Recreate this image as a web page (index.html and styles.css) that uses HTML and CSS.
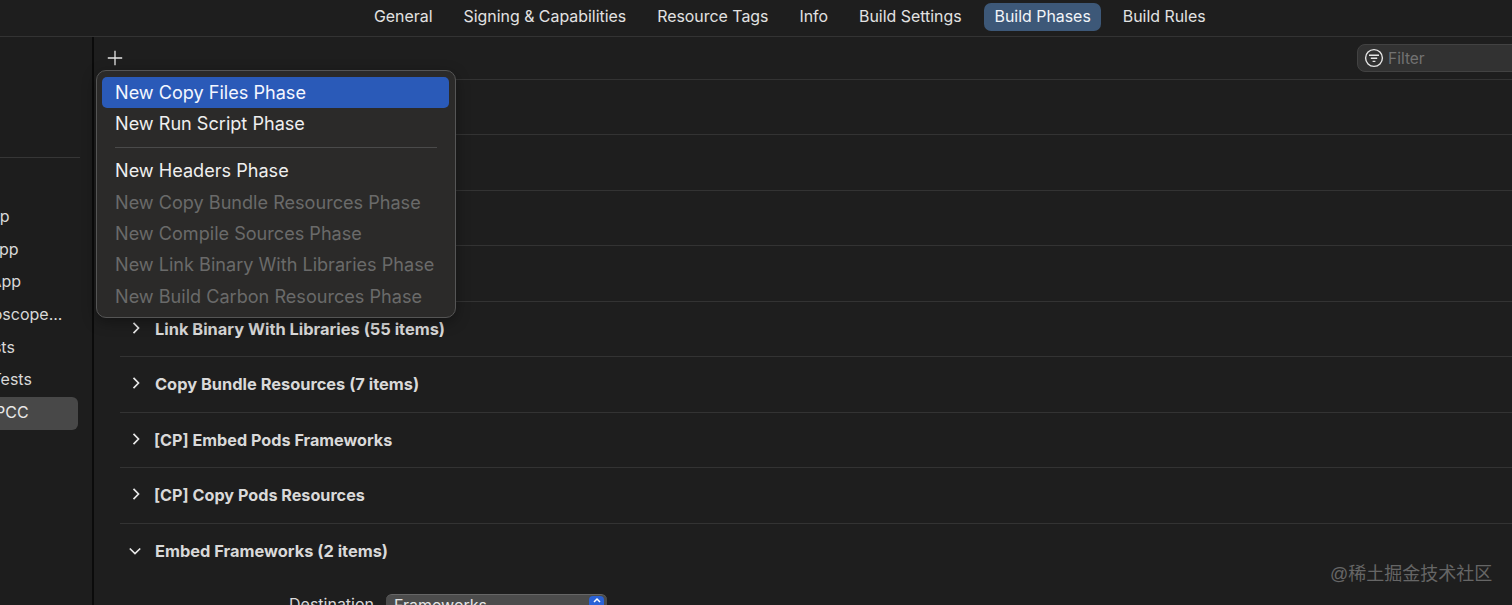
FILE: index.html
```html
<!DOCTYPE html>
<html lang="en">
<head>
<meta charset="utf-8">
<title>Build Phases</title>
<link rel="stylesheet" href="styles.css">
</head>
<body>
<div class="app">
  <nav class="tabs">
    <span class="tab">General</span>
    <span class="tab">Signing &amp; Capabilities</span>
    <span class="tab">Resource Tags</span>
    <span class="tab">Info</span>
    <span class="tab">Build Settings</span>
    <span class="tab active">Build Phases</span>
    <span class="tab">Build Rules</span>
  </nav>
  <div class="body">
    <aside class="sidebar">
      <div class="side-rule"></div>
      <ul class="targets">
        <li class="target"><span class="clip c1">App</span></li>
        <li class="target"><span class="clip c2">App</span></li>
        <li class="target"><span class="clip c3">App</span></li>
        <li class="target"><span class="clip c4">Microscope...</span></li>
        <li class="target"><span class="clip c5">Tests</span></li>
        <li class="target"><span class="clip c6">Tests</span></li>
        <li class="target selected"><span class="clip c7">PCC</span></li>
      </ul>
    </aside>
    <main class="main">
      <div class="toolbar">
        <svg class="plus" width="16" height="16" viewBox="0 0 16 16" aria-hidden="true"><path d="M8 .8v14.4M.8 8h14.4" stroke="#e4e4e4" stroke-width="1.3" fill="none"/></svg>
        <div class="filter">
          <svg width="20" height="20" viewBox="0 0 20 20" aria-hidden="true"><circle cx="10" cy="10" r="8.4" fill="none" stroke="#e6e6e6" stroke-width="1.4"/><path d="M5 7.2h10M6.8 10.3h6.4M8.6 13.4h2.8" stroke="#e6e6e6" stroke-width="1.4" fill="none"/></svg>
          <span class="filter-text">Filter</span>
        </div>
      </div>
      <section class="phases">
        <div class="phase"></div>
        <div class="phase"></div>
        <div class="phase"></div>
        <div class="phase"></div>
        <div class="phase"><svg class="chev" width="10" height="14" viewBox="0 0 10 14" aria-hidden="true"><path d="M2.5 1.8 7.5 7l-5 5.2" fill="none" stroke="#e8e8e8" stroke-width="1.7"/></svg><span class="phase-name">Link Binary With Libraries (55 items)</span></div>
        <div class="phase"><svg class="chev" width="10" height="14" viewBox="0 0 10 14" aria-hidden="true"><path d="M2.5 1.8 7.5 7l-5 5.2" fill="none" stroke="#e8e8e8" stroke-width="1.7"/></svg><span class="phase-name">Copy Bundle Resources (7 items)</span></div>
        <div class="phase"><svg class="chev" width="10" height="14" viewBox="0 0 10 14" aria-hidden="true"><path d="M2.5 1.8 7.5 7l-5 5.2" fill="none" stroke="#e8e8e8" stroke-width="1.7"/></svg><span class="phase-name cp">[CP] Embed Pods Frameworks</span></div>
        <div class="phase"><svg class="chev" width="10" height="14" viewBox="0 0 10 14" aria-hidden="true"><path d="M2.5 1.8 7.5 7l-5 5.2" fill="none" stroke="#e8e8e8" stroke-width="1.7"/></svg><span class="phase-name cp">[CP] Copy Pods Resources</span></div>
        <div class="phase open"><svg class="chev down" width="14" height="10" viewBox="0 0 14 10" aria-hidden="true"><path d="M1.8 2.5 7 7.5l5.2-5" fill="none" stroke="#e8e8e8" stroke-width="1.7"/></svg><span class="phase-name">Embed Frameworks (2 items)</span></div>
        <div class="dest">
          <span class="dest-label">Destination</span>
          <div class="select"><span>Frameworks</span><span class="stepper"><svg width="14" height="14" viewBox="0 0 14 14" aria-hidden="true"><path d="M4 6 7 3l3 3" fill="none" stroke="#fff" stroke-width="1.5"/></svg></span></div>
        </div>
      </section>
    </main>
  </div>
</div>
<div class="menu">
  <div class="item hot">New Copy Files Phase</div>
  <div class="item">New Run Script Phase</div>
  <div class="menu-sep"></div>
  <div class="item">New Headers Phase</div>
  <div class="item off">New Copy Bundle Resources Phase</div>
  <div class="item off">New Compile Sources Phase</div>
  <div class="item off">New Link Binary With Libraries Phase</div>
  <div class="item off">New Build Carbon Resources Phase</div>
</div>
<div class="watermark">@稀土掘金技术社区</div>
</body>
</html>
```
FILE: styles.css
```css
* { box-sizing: border-box; }
html, body { margin: 0; height: 100%; }
body {
  background: #1e1e1e;
  color: #e8e8e8;
  font-family: Inter, "Liberation Sans", sans-serif;
  overflow: hidden;
  position: relative;
}
.app { height: 605px; display: flex; flex-direction: column; overflow: hidden; }
.tabs {
  height: 37px;
  flex: none;
  display: flex;
  align-items: flex-start;
  gap: 10px;
  padding: 3px 0 0 363.5px;
  border-bottom: 1px solid #333;
}
.tab {
  height: 28px;
  line-height: 27px;
  padding: 0 10.5px;
  border-radius: 7px;
  font-size: 15.9px;
  color: #e2e2e2;
  white-space: nowrap;
}
.tab.active { background: #3d5878; color: #f2f5f8; margin: 0 1px 0 2px; }
.body { flex: 1; display: flex; min-height: 0; }
.sidebar {
  width: 94px;
  flex: none;
  border-right: 2px solid #0b0b0b;
  background: #1d1d1d;
  overflow: hidden;
  padding-top: 120px;
}
.side-rule { width: 80px; height: 1px; background: #363636; }
.targets { list-style: none; margin: 43px 0 0; padding: 0; width: 78px; }
.target {
  height: 32.7px;
  line-height: 31px;
  font-size: 16px;
  color: #d8d8d8;
  white-space: nowrap;
  overflow: hidden;
  border-radius: 0 6px 6px 0;
}
.target.selected { background: #484848; color: #e8e8e8; }
.clip { display: block; }
.c1 { margin-left: -21px; }
.c2 { margin-left: -12px; }
.c3 { margin-left: -9.5px; }
.c4 { margin-left: -40.5px; }
.c5 { margin-left: -25.5px; }
.c6 { margin-left: -8.5px; }
.c7 { margin-left: -5px; }
.main { flex: 1; min-width: 0; overflow: hidden; }
.toolbar {
  height: 41.7px;
  position: relative;
  display: flex;
  align-items: center;
  justify-content: space-between;
  padding-left: 13px;
}
.plus { margin-top: 1px; }
.filter {
  width: 170px;
  height: 28px;
  margin-top: 1px;
  margin-right: -15px;
  background: #323232;
  border: 1px solid #424242;
  border-radius: 8px;
  display: flex;
  align-items: center;
  gap: 4px;
  padding-left: 6px;
}
.filter-text { font-size: 15.5px; color: #727272; }
.phases { margin-left: 26px; }
.phase {
  height: 55.5px;
  border-top: 1px solid #333;
  display: flex;
  align-items: center;
  position: relative;
  font-size: 16.4px;
  font-weight: 700;
  color: #d9d9d9;
}
.chev { position: absolute; left: 11px; top: 19px; }
.chev.down { left: 8px; top: 22px; }
.phase-name { margin-left: 35px; white-space: nowrap; }
.phase-name.cp { margin-left: 34px; font-size: 16.2px; }
.dest {
  display: flex;
  align-items: flex-start;
  padding: 16px 0 0 169px;
  gap: 12px;
  height: 60px;
}
.dest-label { font-size: 16px; line-height: 20px; color: #d9d9d9; }
.select {
  width: 221px;
  height: 28px;
  border-radius: 6px;
  background: #4c4c4c;
  border-top: 1px solid #666;
  font-size: 16px;
  line-height: 20px;
  color: #e4e4e4;
  padding-left: 8px;
  position: relative;
}
.stepper {
  position: absolute;
  right: 3px;
  top: 1px;
  width: 15px;
  height: 22px;
  background: #2a62d6;
  border-radius: 4px;
  display: flex;
  justify-content: center;
}
.menu {
  position: absolute;
  left: 96px;
  top: 70px;
  width: 360px;
  height: 248px;
  background: #2b2a29;
  border: 1px solid #555;
  border-radius: 10px;
  padding: 6px 6px 6px 5px;
  box-shadow: 0 4px 14px rgba(0,0,0,.35);
}
.item {
  height: 31.4px;
  line-height: 31.4px;
  padding-left: 13px;
  border-radius: 5px;
  font-size: 18.1px;
  color: #efefef;
  white-space: nowrap;
}
.item.hot { background: #2a5ab8; color: #f4f7ff; }
.item.off { color: #6a6a6a; }
.menu-sep { height: 1px; margin: 7.5px 12px 7px 13px; background: #4a4a4a; }
.watermark {
  position: absolute;
  left: 1330px;
  top: 563px;
  font-family: "Liberation Sans", "Noto Sans CJK SC", sans-serif;
  font-size: 18px;
  line-height: 22px;
  color: #666;
  white-space: nowrap;
}
```
